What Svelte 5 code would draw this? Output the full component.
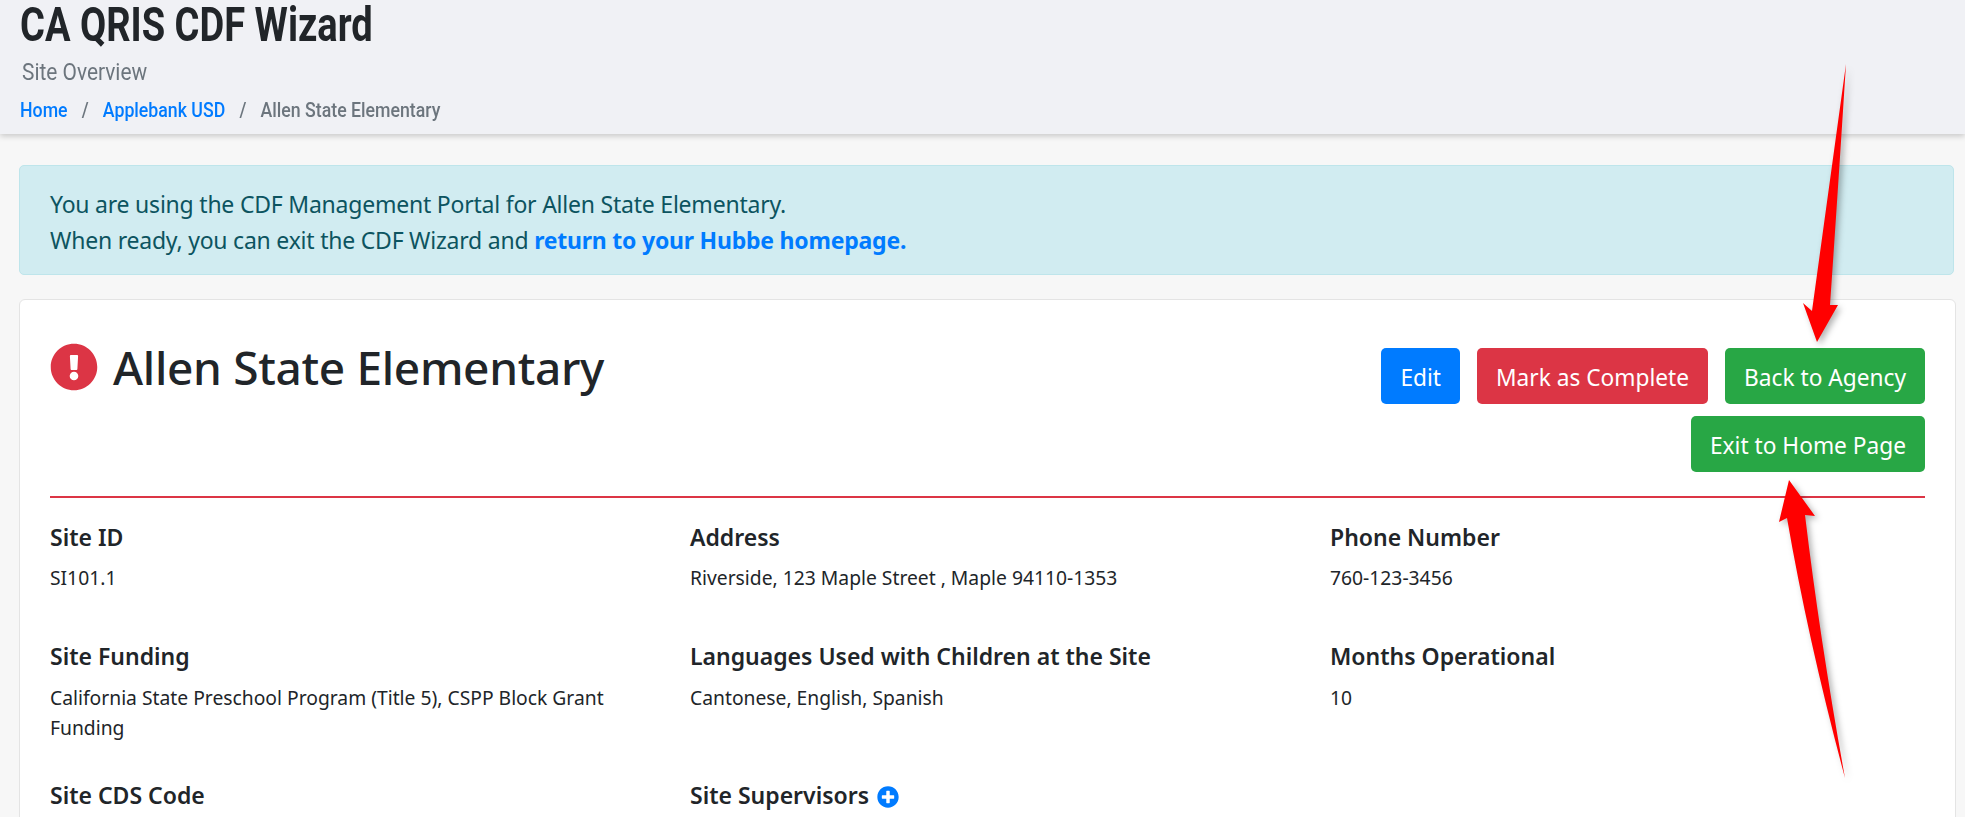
<script>
  const sections = [
    { label: 'Site ID', value: 'SI101.1' },
    { label: 'Address', value: 'Riverside, 123 Maple Street , Maple 94110-1353' },
    { label: 'Phone Number', value: '760-123-3456' },
    { label: 'Site Funding', value: 'California State Preschool Program (Title 5), CSPP Block Grant Funding' },
    { label: 'Languages Used with Children at the Site', value: 'Cantonese, English, Spanish' },
    { label: 'Months Operational', value: '10' },
    { label: 'Site CDS Code', value: '' },
    { label: 'Site Supervisors', value: '', add: true },
  ];
</script>

<div class="page">
  <header class="top">
    <h1>CA QRIS CDF Wizard</h1>
    <h2>Site Overview</h2>
    <nav class="crumbs">
      <a href="#home">Home</a><span class="sep">/</span>
      <a href="#agency">Applebank USD</a><span class="sep">/</span>
      <span class="current">Allen State Elementary</span>
    </nav>
  </header>

  <main class="content">
    <div class="alert">
      You are using the CDF Management Portal for Allen State Elementary.<br />
      When ready, you can exit the CDF Wizard and <a href="#hubbe">return to your Hubbe homepage.</a>
    </div>

    <section class="card">
      <div class="title-row">
        <div class="title">
          <svg class="warn" viewBox="0 0 512 512" aria-hidden="true">
            <path fill="#dc3545" d="M504 256c0 137-111 248-248 248S8 393 8 256 119 8 256 8s248 111 248 248zm-248 50c-25.400 0-46 20.600-46 46s20.600 46 46 46 46-20.600 46-46-20.600-46-46-46zm-43.700-165.300l7.400 136c.3 6.400 5.600 11.300 12 11.300h48.500c6.400 0 11.700-5 12-11.300l7.400-136c.4-6.900-5.100-12.700-12-12.700h-63.400c-6.900 0-12.400 5.800-11.900 12.700z" />
          </svg>
          <h3>Allen State Elementary</h3>
        </div>
        <div class="actions">
          <button class="btn blue">Edit</button>
          <button class="btn red">Mark as Complete</button>
          <button class="btn green">Back to Agency</button>
          <button class="btn green">Exit to Home Page</button>
        </div>
      </div>

      <div class="fields">
        {#each sections as s}
          <div class="field">
            <h4>
              {s.label}
              {#if s.add}
                <svg class="plus" viewBox="0 0 512 512" aria-hidden="true">
                  <path fill="#007bff" d="M256 8C119 8 8 119 8 256s111 248 248 248 248-111 248-248S393 8 256 8zm144 276c0 6.600-5.400 12-12 12h-92v92c0 6.600-5.400 12-12 12h-56c-6.600 0-12-5.400-12-12v-92h-92c-6.600 0-12-5.400-12-12v-56c0-6.600 5.400-12 12-12h92v-92c0-6.600 5.400-12 12-12h56c6.600 0 12 5.400 12 12v92h92c6.600 0 12 5.400 12 12v56z" />
                </svg>
              {/if}
            </h4>
            {#if s.value}<p>{s.value}</p>{/if}
          </div>
        {/each}
      </div>
    </section>
  </main>

  <!-- red annotation arrows drawn over the screenshot -->
  <svg class="arrows" viewBox="0 0 1965 817" aria-hidden="true">
    <path d="M1846 64 Q1838 190 1830 305 L1838 305 L1817 342 L1803 303 L1812 311 Q1830 180 1846 64Z" />
    <path d="M1789 480 L1815 516 L1805 515 Q1820 640 1845 778 Q1808 640 1787 518 L1779 522Z" />
  </svg>
</div>

<style>
  :global(body) {
    margin: 0;
    background: #f7f7f7;
    color: #212529;
    font-family: "Noto Sans", "Open Sans", sans-serif;
  }
  .page {
    position: relative;
    height: 817px;
    overflow: hidden;
  }
  .top {
    height: 134px;
    box-sizing: border-box;
    padding: 1px 20px 0;
    background: #f0f1f5;
    box-shadow: 0 2px 6px rgba(0, 0, 0, 0.2);
    font-family: Roboto, sans-serif;
  }
  h1 {
    margin: 0;
    font-size: 48px;
    line-height: 48px;
    font-weight: 700;
    transform: scaleX(0.793);
    transform-origin: left;
  }
  h2 {
    margin: 9px 0 0 2px;
    font-size: 24px;
    line-height: 28px;
    font-weight: 400;
    color: #6c757d;
    transform: scaleX(0.87);
    transform-origin: left;
  }
  .crumbs {
    display: flex;
    margin-top: 12px;
    font-size: 20px;
    line-height: 24px;
    font-weight: 500;
    transform: scaleX(0.886);
    transform-origin: left;
  }
  .crumbs a {
    color: #007bff;
    text-decoration: none;
  }
  .sep {
    color: #6c757d;
    padding: 0 16px;
  }
  .current {
    color: #6c757d;
  }
  .content {
    padding: 31px 9px 0 19px;
  }
  .alert {
    box-sizing: border-box;
    height: 110px;
    margin-right: 2px;
    padding: 20px 30px;
    background: #d1ecf1;
    border: 1px solid #bee5eb;
    border-radius: 5px;
    color: #0c5460;
    font-size: 23px;
    line-height: 36px;
    letter-spacing: -0.22px;
  }
  .alert a {
    color: #007bff;
    font-weight: 700;
    text-decoration: none;
  }
  .card {
    margin-top: 24px;
    height: 600px;
    box-sizing: border-box;
    padding: 48px 30px 0;
    background: #fff;
    border: 1px solid #e4e4e4;
    border-radius: 6px;
  }
  .title-row {
    display: flex;
    justify-content: space-between;
    height: 148px;
    border-bottom: 2px solid #dc3545;
  }
  .title {
    display: flex;
    align-items: flex-start;
    gap: 15px;
  }
  .warn {
    width: 48px;
    height: 48px;
    margin-top: -5px;
  }
  h3 {
    margin: -10px 0 0;
    font-size: 46px;
    line-height: 58px;
    font-weight: 500;
    letter-spacing: -0.33px;
  }
  .actions {
    display: flex;
    flex-wrap: wrap;
    justify-content: flex-end;
    align-content: flex-start;
    gap: 12px 17px;
    width: 640px;
  }
  .btn {
    height: 56px;
    padding: 2px 19px 0;
    border: none;
    border-radius: 5px;
    color: #fff;
    font-family: inherit;
    font-size: 22.7px;
  }
  .blue { background: #007bff; }
  .red { background: #dc3545; }
  .green { background: #28a745; }
  .fields {
    display: grid;
    grid-template-columns: repeat(3, 640px);
    margin-top: 25px;
  }
  .field {
    min-height: 119px;
  }
  .field:nth-child(n+4) {
    min-height: 139px;
  }
  .field:nth-child(n+4) p {
    margin-top: 13px;
  }
  h4 {
    margin: 0;
    font-size: 23px;
    line-height: 28px;
    font-weight: 600;
  }
  .plus {
    width: 22px;
    height: 22px;
    margin-left: 2px;
    vertical-align: -4px;
  }
  p {
    margin: 12px 0 0;
    width: 560px;
    font-size: 19.3px;
    line-height: 30px;
  }
  .arrows {
    position: absolute;
    inset: 0;
    width: 1965px;
    height: 817px;
    pointer-events: none;
    filter: drop-shadow(3px 3px 3px rgba(0, 0, 0, 0.3));
  }
  .arrows path {
    fill: #ff0000;
  }
</style>
